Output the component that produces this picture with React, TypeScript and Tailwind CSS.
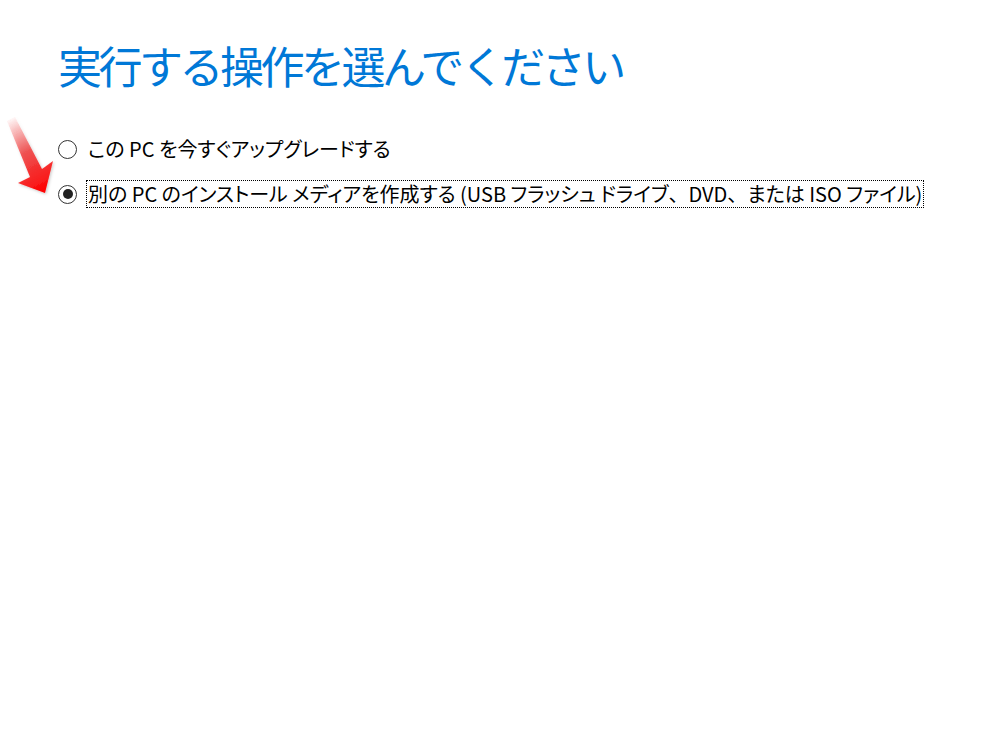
import { useState } from 'react'

const Comma = () => <span style={{ fontFeatureSettings: 'normal' }}>、</span>

const options = [
  { id: 'upgrade', label: <>この PC を今すぐアップグレードする</> },
  {
    id: 'media',
    label: (
      <>
        別の PC のインストール メディアを作成する (USB フラッシュ ドライブ<Comma />DVD<Comma />または ISO ファイル)
      </>
    ),
  },
]

function Arrow() {
  return (
    <svg className="absolute left-0 top-0 pointer-events-none" width="80" height="220" viewBox="0 0 80 220">
      <defs>
        <linearGradient id="arrowFill" x1="8" y1="118" x2="46" y2="192" gradientUnits="userSpaceOnUse">
          <stop offset="0" stopColor="#ff4040" stopOpacity="0" />
          <stop offset="0.45" stopColor="#f02020" stopOpacity="0.7" />
          <stop offset="1" stopColor="#ff0000" />
        </linearGradient>
        <filter id="arrowShadow" x="-30%" y="-30%" width="160%" height="160%">
          <feDropShadow dx="1" dy="1" stdDeviation="1.5" floodColor="#000" floodOpacity="0.25" />
        </filter>
      </defs>
      <polygon
        points="7,121 15,117 42,169 53,161 45,193 18,183 30,177"
        fill="url(#arrowFill)"
        filter="url(#arrowShadow)"
      />
    </svg>
  )
}

function Radio({ checked }: { checked: boolean }) {
  return (
    <span className="flex h-[19px] w-[19px] shrink-0 items-center justify-center rounded-full border border-[#333] bg-white">
      {checked && <span className="h-[10px] w-[10px] rounded-full bg-[#222]" />}
    </span>
  )
}

export default function App() {
  const [selected, setSelected] = useState('media')

  return (
    <div
      className="relative min-h-[737px] w-[1000px] bg-white pl-[58px] pt-[34px]"
      style={{ fontFamily: '"Noto Sans CJK JP", "Noto Sans", sans-serif' }}
    >
      <Arrow />
      <h1 className="text-[44px] leading-[62px] font-normal text-[#0078d7] tracking-[-3.5px]">
        実行する操作を選んでください
      </h1>

      <div className="mt-[39px] flex flex-col gap-[17px]">
        {options.map((o) => (
          <label
            key={o.id}
            className="flex cursor-default items-center gap-[9px] text-[20px] leading-[26px] text-black"
            onClick={() => setSelected(o.id)}
          >
            <Radio checked={selected === o.id} />
            <span
              className={
                selected === o.id
                  ? 'border border-dotted border-black px-px'
                  : 'border border-transparent px-px'
              }
              style={{ fontFeatureSettings: '"palt"' }}
            >
              {o.label}
            </span>
          </label>
        ))}
      </div>
    </div>
  )
}
